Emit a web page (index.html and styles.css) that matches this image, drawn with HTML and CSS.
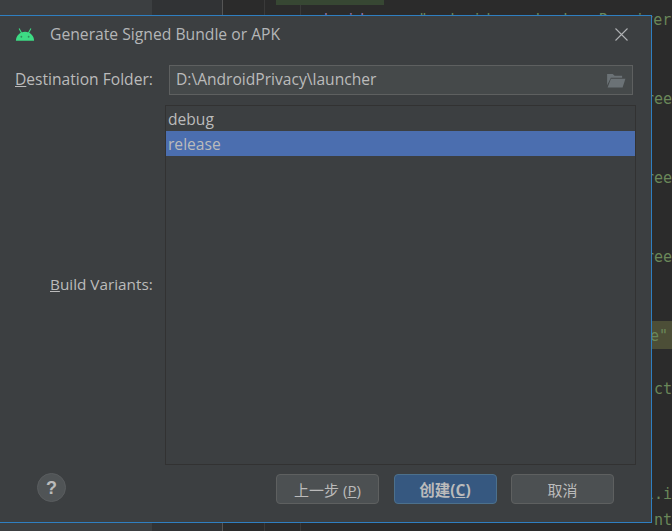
FILE: index.html
```html
<!DOCTYPE html>
<html lang="zh">
<head>
<meta charset="utf-8">
<title>Generate Signed Bundle or APK</title>
<link rel="stylesheet" href="styles.css">
</head>
<body>
<div class="ide">
  <div class="side"></div>
  <div class="gutter"></div>
  <div class="editor">
    <div class="top-hl"></div>
    <div class="line code"><span class="ns">android</span><span class="attr">:name=</span>"android.app.backup.Receiver</div>
    <div class="line"></div>
    <div class="line"></div>
    <div class="line">ree</div>
    <div class="line"></div>
    <div class="line"></div>
    <div class="line">ree</div>
    <div class="line"></div>
    <div class="line"></div>
    <div class="line">ree</div>
    <div class="line"></div>
    <div class="line"></div>
    <div class="line hl">e"</div>
    <div class="line"></div>
    <div class="line">ct</div>
    <div class="line"></div>
    <div class="line"></div>
    <div class="line"></div>
    <div class="line">l.i</div>
    <div class="line">nt</div>
  </div>
</div>

<div class="dialog">
  <header class="head">
    <svg class="droid" width="20" height="13" viewBox="0 0 22 14" aria-hidden="true">
      <path d="M1 14C1 8.500 5.500 4 11 4s10 4.500 10 10z" fill="#3ddc84"/>
      <path d="M4.500 0.500L7.500 6M17.500 0.500L14.500 6" stroke="#3ddc84" stroke-width="1.200" fill="none"/>
      <circle cx="7" cy="9.500" r="1" fill="#2f8f5c"/>
      <circle cx="15" cy="9.500" r="1" fill="#2f8f5c"/>
    </svg>
    <span class="title">Generate Signed Bundle or APK</span>
    <svg class="close" width="13" height="13" viewBox="0 0 13 13" aria-hidden="true">
      <path d="M0.500 0.500L12.500 12.500M12.500 0.500L0.500 12.500" stroke="#afb1b3" stroke-width="1.100" fill="none"/>
    </svg>
  </header>

  <div class="form">
    <div class="row-dest">
      <label class="lbl"><u>D</u>estination Folder:</label>
      <div class="field">
        <span class="path">D:\AndroidPrivacy\launcher</span>
        <svg width="19" height="15" viewBox="0 0 20 16" aria-hidden="true">
          <path d="M0 1h6l2 2h8v2H4L0 13z" fill="#6b7276"/>
          <path d="M4 6h15.500l-3 9.500H0.500z" fill="#6b7276"/>
        </svg>
      </div>
    </div>
    <div class="row-list">
      <label class="lbl"><u>B</u>uild Variants:</label>
      <div class="list">
        <div class="item">debug</div>
        <div class="item sel">release</div>
      </div>
    </div>
  </div>

  <footer class="foot">
    <div class="help">?</div>
    <div class="btns">
      <button class="btn">上一步 (<u>P</u>)</button>
      <button class="btn primary">创建(<u>C</u>)</button>
      <button class="btn">取消</button>
    </div>
  </footer>
</div>
</body>
</html>
```
FILE: styles.css
```css
* { box-sizing: border-box; }
html, body { margin: 0; padding: 0; }
body {
  width: 672px;
  height: 531px;
  overflow: hidden;
  position: relative;
  background: #2b2b2b;
  font-family: "Open Sans", "Noto Sans CJK SC", sans-serif;
}
.ide { display: flex; height: 531px; }
.side { width: 152px; background: #3c3f41; }
.gutter { width: 71px; background: #313335; border-right: 1px solid #555555; }
.editor {
  flex: 1;
  min-width: 0;
  font-family: "DejaVu Sans Mono", monospace;
  font-size: 15px;
  color: #6a8759;
  background-image:
    linear-gradient(#3a3a3a, #3a3a3a),
    linear-gradient(#3a3a3a, #3a3a3a);
  background-size: 1px 100%, 1px 100%;
  background-position: 41px 0, 77px 0;
  background-repeat: no-repeat;
}
.top-hl { height: 5px; width: 108px; margin: 0 0 2px 53px; background: #374733; }
.line { height: 26.33px; line-height: 26.33px; text-align: right; white-space: nowrap; overflow: hidden; }
.code { text-align: left; padding-left: 78px; }
.ns { color: #9876aa; }
.attr { color: #bababa; }
.hl { background: #4c4e37; padding: 2px 4px 0 0; margin-top: -2px; height: 28.33px; }

.dialog {
  position: absolute;
  left: -1px;
  top: 15px;
  width: 653px;
  height: 508px;
  background: #3c3f41;
  border: 1px solid #2f7fc1;
  display: flex;
  flex-direction: column;
  color: #bbbbbb;
  font-size: 15.6px;
}
.head { display: flex; align-items: center; height: 36px; padding: 0 23px 0 15px; flex: none; }
.droid { flex: none; }
.title { margin-left: 15px; flex: 1; color: #b4b6b8; font-size: 15.7px; }
.form { flex: 1; display: flex; flex-direction: column; padding: 13px 18px 0 15px; min-height: 0; }
.row-dest { display: flex; align-items: center; height: 30px; }
.row-dest .lbl { width: 154px; flex: none; margin-bottom: 2px; }
.lbl { color: #bbbbbb; white-space: nowrap; }
.field {
  flex: 1;
  height: 30px;
  border: 1px solid #5e6060;
  background: #45494a;
  display: flex;
  align-items: center;
  justify-content: space-between;
  padding: 0 6px;
}
.path { margin-bottom: 2px; }
.row-list { flex: 1; display: flex; align-items: center; margin: 10px -3px 9px 0; min-height: 0; }
.row-list .lbl { width: 150px; flex: none; padding-left: 35px; font-size: 15.3px; margin-bottom: 2px; }
.list { flex: 1; align-self: stretch; border: 1px solid #323232; background: #3c3f41; }
.item { height: 25px; line-height: 25px; padding: 1px 0 0 2px; color: #bbbbbb; }
.sel { background: #4b6eaf; }

.foot { display: flex; align-items: flex-start; justify-content: space-between; height: 48px; flex: none; padding: 0 37px; }
.help {
  width: 29px; height: 29px; border-radius: 50%;
  background: #505456; border: 1px solid #5a5d5f;
  color: #bbbbbb; font: bold 18px/29px "Liberation Sans", sans-serif; text-align: center;
  margin-top: -1px;
}
.btns { display: flex; gap: 14.5px; }
.btn {
  width: 103px; height: 30px; border-radius: 4px;
  background: #4c5052; border: 1px solid #5e6060;
  color: #bbbbbb; font-family: "Open Sans", "Noto Sans CJK SC", sans-serif; font-size: 15px; padding: 0;
}
.primary { background: #365880; border-color: #4c708c; font-weight: 700; font-size: 15.5px; }
```
